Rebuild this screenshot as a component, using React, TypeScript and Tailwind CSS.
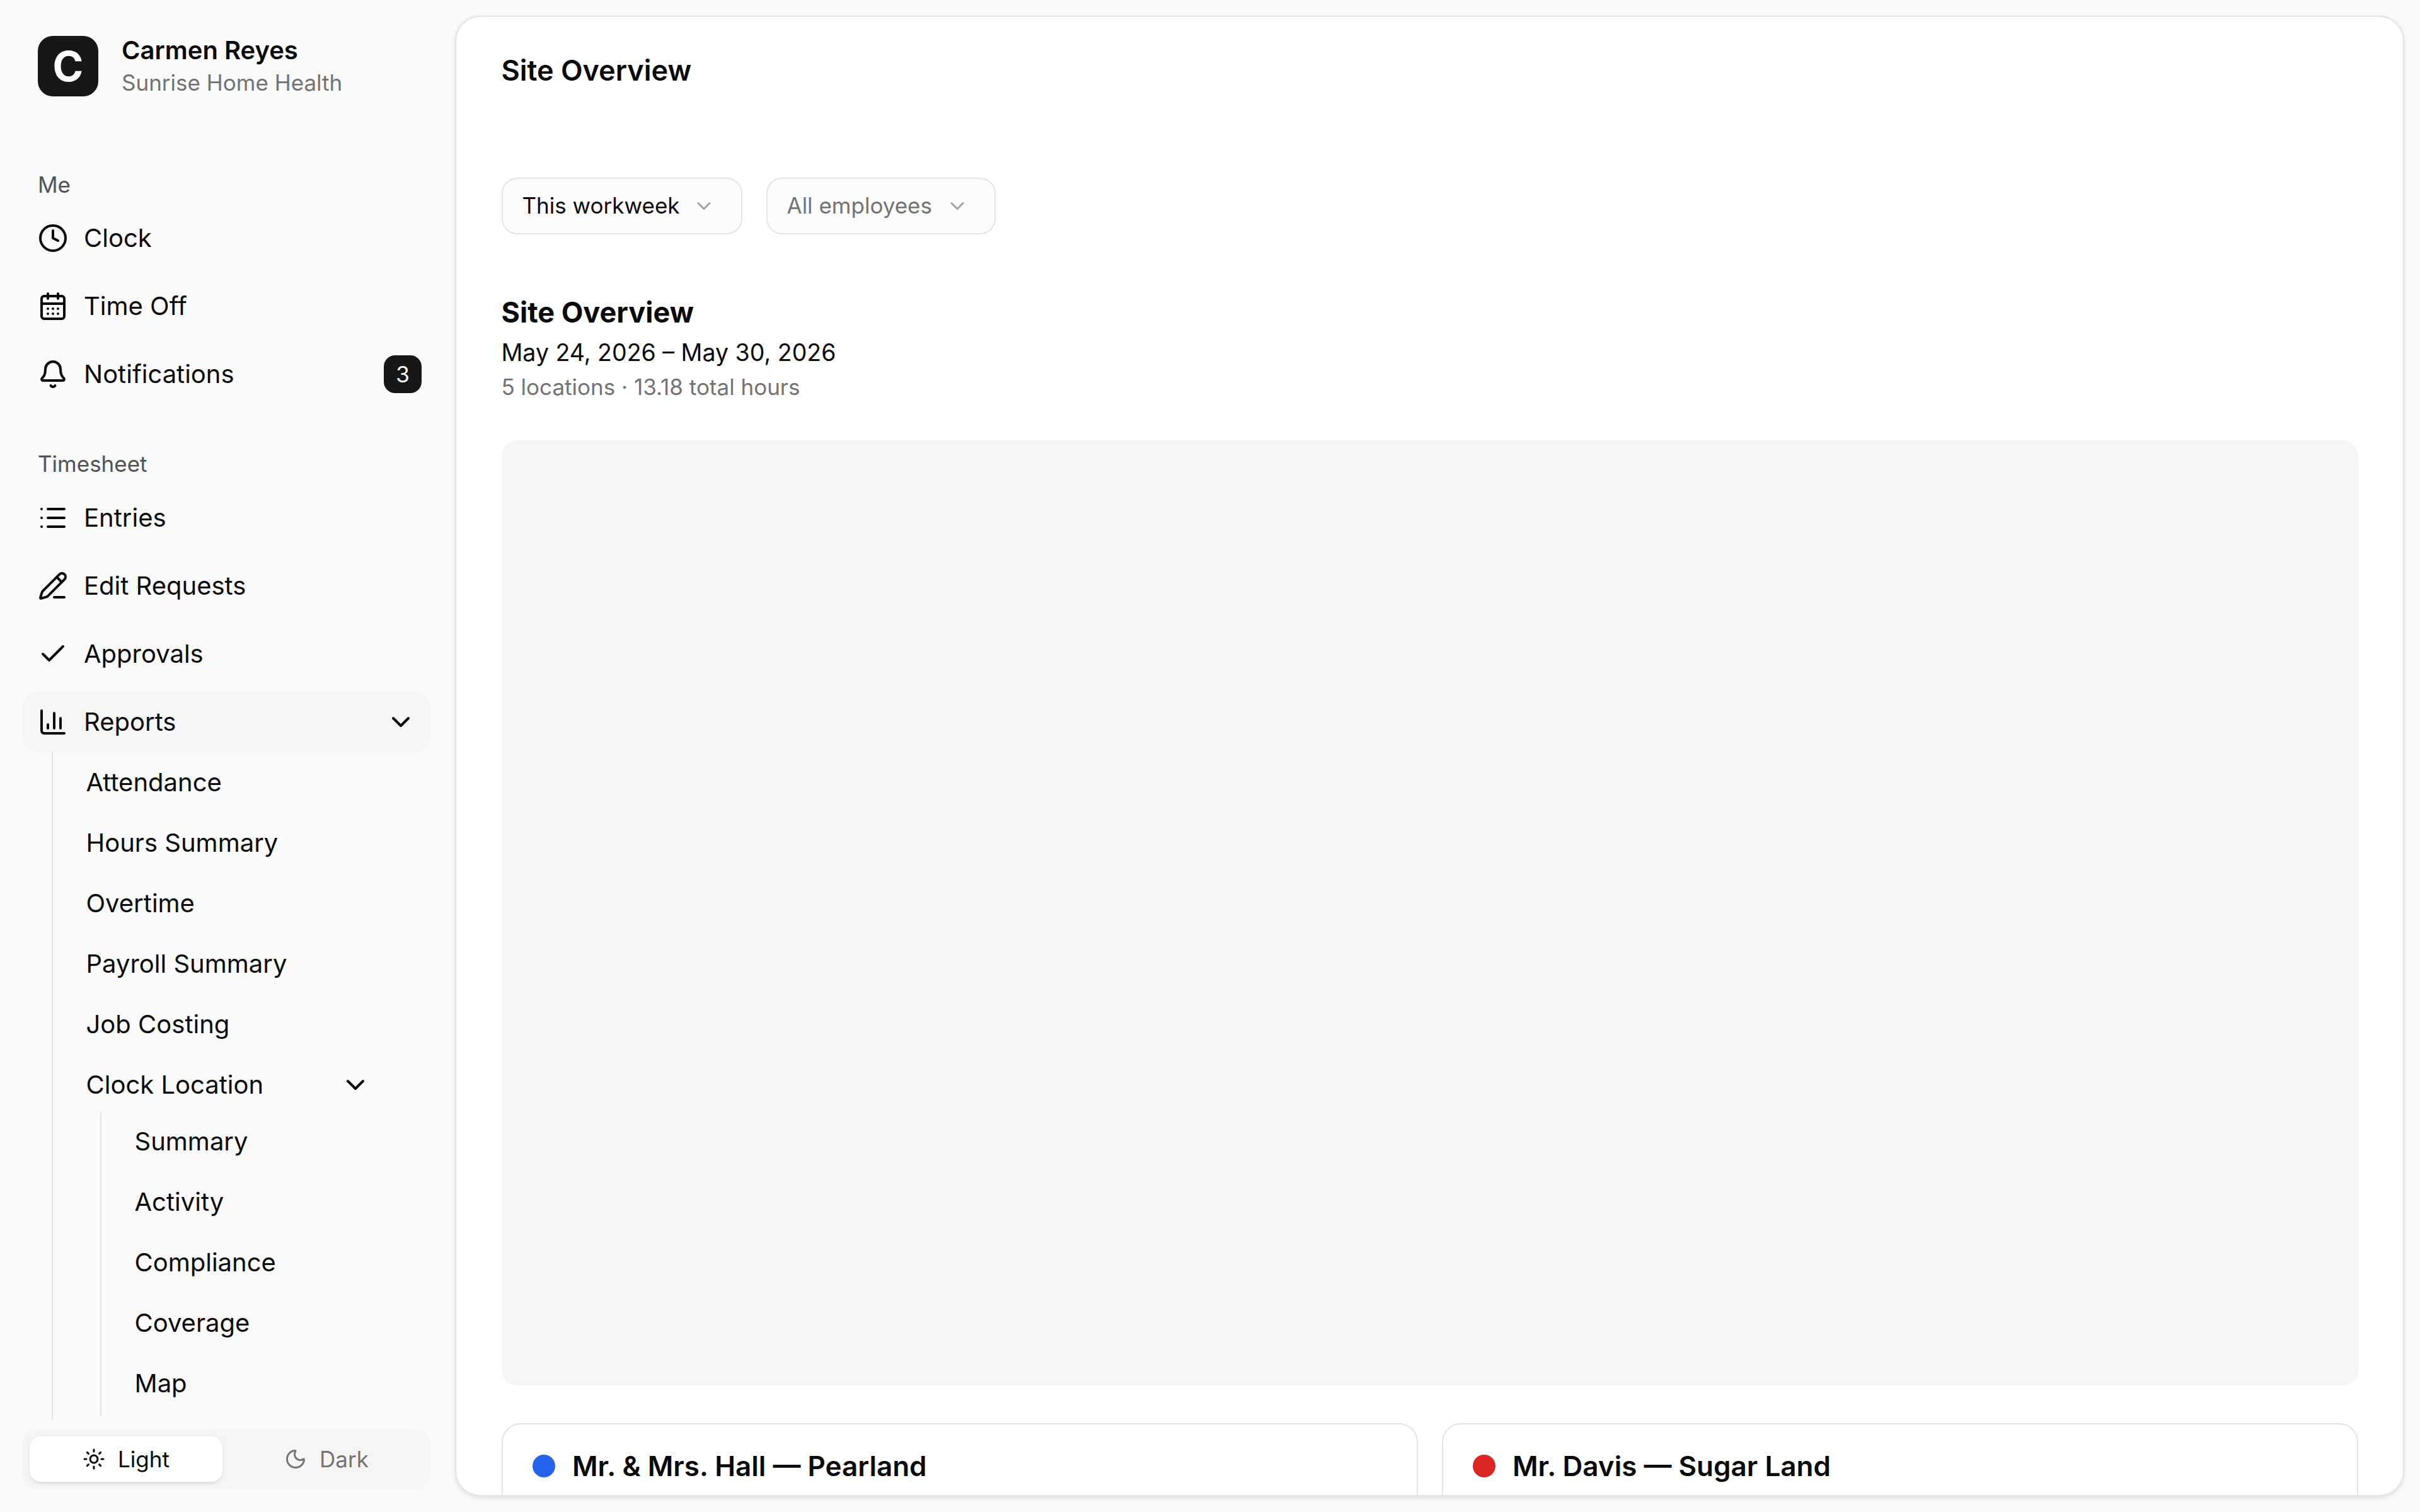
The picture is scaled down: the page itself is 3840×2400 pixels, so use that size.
import React from 'react';
import {
  Bell,
  CalendarDays,
  Check,
  ChartColumn,
  ChevronDown,
  Clock,
  List,
  Moon,
  PencilLine,
  Sun,
} from 'lucide-react';

interface NavRowProps {
  icon: React.ElementType;
  label: string;
  active?: boolean;
  children?: React.ReactNode;
}

function NavRow({ icon: Icon, label, active, children }: NavRowProps) {
  return (
    <div
      className={`flex h-[96px] items-center gap-[25px] rounded-[25px] pl-[25px] text-[#0a0a0a] ${
        active ? 'bg-[#f5f5f5]' : ''
      }`}
    >
      <Icon size={48} strokeWidth={2} className="shrink-0" />
      <span className="text-[40px] leading-[60px]">{label}</span>
      {children}
    </div>
  );
}

function SubRow({ label }: { label: string }) {
  return <div className="flex h-[96px] items-center text-[40px] text-[#0a0a0a]">{label}</div>;
}

function SectionLabel({ label, className }: { label: string; className: string }) {
  return <div className={`h-[48px] pl-[25px] text-[35px] leading-[48px] text-[#525252] ${className}`}>{label}</div>;
}

function FilterSelect({ label, muted, className }: { label: string; muted?: boolean; className: string }) {
  return (
    <div
      className={`flex h-[90px] items-center justify-between rounded-[25px] border-[2.5px] border-[#e5e5e5] bg-[#fcfcfc] text-[35px] ${className} ${
        muted ? 'text-[#737373]' : 'text-[#0a0a0a]'
      }`}
    >
      <span>{label}</span>
      <ChevronDown size={36} strokeWidth={2} className="text-[#a3a3a3]" />
    </div>
  );
}

function SiteCard({ name, dot }: { name: string; dot: string }) {
  return (
    <div className="h-[300px] rounded-[30px] border-[2.5px] border-[#e5e5e5] pl-[47.5px] pt-[39px]">
      <div className="flex h-[55px] items-center gap-[27px]">
        <span className={`size-[36px] rounded-full ${dot}`} />
        <span className="text-[44px] font-semibold text-[#0a0a0a]">{name}</span>
      </div>
    </div>
  );
}

export default function App() {
  return (
    <div className="flex h-screen w-full overflow-hidden bg-[#fafafa] font-[Inter,sans-serif]">
      <aside className="flex h-full w-[722px] shrink-0 flex-col pl-[35px] pr-[39px]">
        <div className="mt-[54px] flex items-center gap-[37px] pl-[25px]">
          <div className="flex size-[96px] items-center justify-center rounded-[24px] bg-[#171717] text-[66px] font-bold leading-none text-white">
            C
          </div>
          <div className="flex flex-col">
            <span className="text-[40px] font-semibold leading-[52px] text-[#0a0a0a]">Carmen Reyes</span>
            <span className="text-[35px] leading-[50px] text-[#737373]">Sunrise Home Health</span>
          </div>
        </div>

        <SectionLabel label="Me" className="mt-[113px]" />
        <nav className="mt-[13px] flex flex-col gap-[12px]">
          <NavRow icon={Clock} label="Clock" />
          <NavRow icon={CalendarDays} label="Time Off" />
          <NavRow icon={Bell} label="Notifications">
            <span className="ml-auto mr-[14px] flex size-[60px] items-center justify-center rounded-[18px] bg-[#171717] text-[35px] text-white">
              3
            </span>
          </NavRow>
        </nav>

        <SectionLabel label="Timesheet" className="mt-[70px]" />
        <nav className="mt-[14px] flex flex-col gap-[12px]">
          <NavRow icon={List} label="Entries" />
          <NavRow icon={PencilLine} label="Edit Requests" />
          <NavRow icon={Check} label="Approvals" />
          <NavRow icon={ChartColumn} label="Reports" active>
            <ChevronDown size={48} strokeWidth={2} className="ml-auto mr-[23px]" />
          </NavRow>
        </nav>

        <div className="ml-[46.5px] border-l-[2.5px] border-[#e5e5e5] pb-[5px] pl-[53px]">
          <SubRow label="Attendance" />
          <SubRow label="Hours Summary" />
          <SubRow label="Overtime" />
          <SubRow label="Payroll Summary" />
          <SubRow label="Job Costing" />
          <div className="flex h-[96px] w-[451px] items-center justify-between text-[40px] text-[#0a0a0a]">
            <span>Clock Location</span>
            <ChevronDown size={48} strokeWidth={2} />
          </div>
          <div className="-mt-[6px] ml-[22px] border-l-[2.5px] border-[#e5e5e5] pb-[5px] pl-[53px]">
            <SubRow label="Summary" />
            <SubRow label="Activity" />
            <SubRow label="Compliance" />
            <SubRow label="Coverage" />
            <SubRow label="Map" />
          </div>
        </div>

        <div className="mb-[36px] mt-auto grid h-[96px] grid-cols-2 gap-[12px] rounded-[25px] bg-[#f5f5f5] p-[12px] text-[35px]">
          <div className="flex items-center justify-center gap-[20px] rounded-[18px] bg-white text-[#0a0a0a] shadow-[0_2.5px_5px_rgba(0,0,0,0.1)]">
            <Sun size={36} strokeWidth={2} />
            <span>Light</span>
          </div>
          <div className="flex items-center justify-center gap-[20px] text-[#737373]">
            <Moon size={36} strokeWidth={2} />
            <span>Dark</span>
          </div>
        </div>
      </aside>

      <main className="my-[25px] mr-[25px] min-w-0 flex-1 overflow-hidden rounded-[40px] border-[2.5px] border-[#e5e5e5] bg-white px-[71.5px] pt-[54.5px] shadow-[0_2.5px_7.5px_rgba(0,0,0,0.1)]">
        <h1 className="text-[45px] font-semibold leading-[60px] text-[#0a0a0a]">Site Overview</h1>

        <div className="mt-[140px] flex gap-[38px]">
          <FilterSelect label="This workweek" className="w-[382px] pl-[31px] pr-[41px]" />
          <FilterSelect label="All employees" muted className="w-[364px] pl-[31px] pr-[41px]" />
        </div>

        <h2 className="mt-[94px] text-[45px] font-bold leading-[60px] text-[#0a0a0a]">Site Overview</h2>
        <p className="mt-[9px] text-[37.5px] leading-[50px] text-[#0a0a0a]">May 24, 2026 – May 30, 2026</p>
        <p className="mt-[4px] text-[35px] leading-[50px] text-[#737373]">5 locations · 13.18 total hours</p>

        <div className="mt-[60px] h-[1500px] rounded-[25px] bg-[#f5f5f5]" />

        <div className="mt-[60px] grid grid-cols-2 gap-[38px]">
          <SiteCard name="Mr. & Mrs. Hall — Pearland" dot="bg-[#2563eb]" />
          <SiteCard name="Mr. Davis — Sugar Land" dot="bg-[#dc2626]" />
        </div>
      </main>
    </div>
  );
}
